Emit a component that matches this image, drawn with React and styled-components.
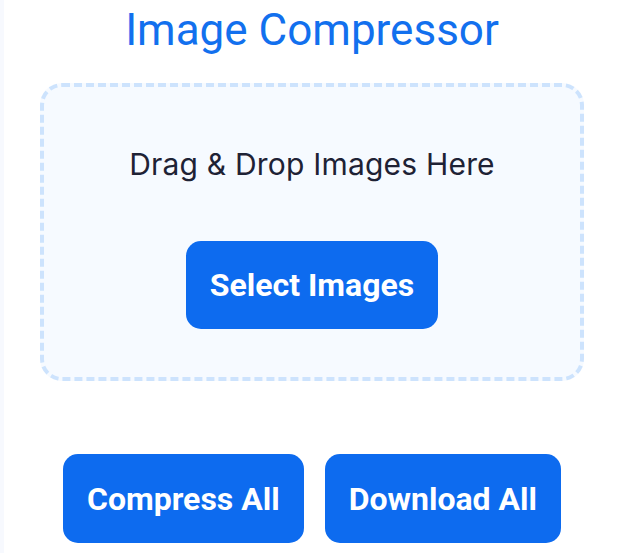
import styled, { createGlobalStyle } from 'styled-components';

const GlobalStyle = createGlobalStyle`
  body {
    margin: 0;
    background: #f7f9fe;
    font-family: Roboto, "Liberation Sans", sans-serif;
  }
`;

const Page = styled.div`
  padding-left: 4px;
  min-height: 553px;
  overflow: hidden;
`;

const Card = styled.main`
  width: 544px;
  min-height: 553px;
  padding: 4px 36px 0;
  background: #ffffff;
  display: flex;
  flex-direction: column;
  align-items: center;
`;

const Title = styled.h1`
  margin: 0;
  font-size: 44px;
  line-height: 52px;
  font-weight: 400;
  color: #1270ee;
`;

const DropZone = styled.section`
  box-sizing: border-box;
  width: 544px;
  height: 298px;
  margin-top: 27px;
  border: 4px dashed #cde3fd;
  border-radius: 22px;
  background: #f6faff;
  display: flex;
  flex-direction: column;
  align-items: center;
  padding-top: 60px;
  gap: 60px;
`;

const DropText = styled.p`
  margin: 0;
  font-family: Inter, "Noto Sans", sans-serif;
  font-size: 30px;
  line-height: 34px;
  letter-spacing: 0.2px;
  color: #1e2235;
`;

const Button = styled.button`
  border: none;
  border-radius: 15px;
  background: #0d6bef;
  color: #ffffff;
  font-family: Roboto, "Liberation Sans", sans-serif;
  font-weight: 700;
  font-size: 32px;
  line-height: 38px;
  height: ${(p) => p.$height}px;
  padding: 0 ${(p) => p.$pad}px;
  cursor: pointer;
`;

const Actions = styled.div`
  display: flex;
  gap: 21px;
  margin-top: 73px;
`;

export default function App() {
  return (
    <>
      <GlobalStyle />
      <Page>
        <Card>
          <Title>Image Compressor</Title>
          <DropZone>
            <DropText>Drag &amp; Drop Images Here</DropText>
            <Button $height={88} $pad={24}>Select Images</Button>
          </DropZone>
          <Actions>
            <Button $height={89} $pad={24}>Compress All</Button>
            <Button $height={89} $pad={24}>Download All</Button>
          </Actions>
        </Card>
      </Page>
    </>
  );
}
